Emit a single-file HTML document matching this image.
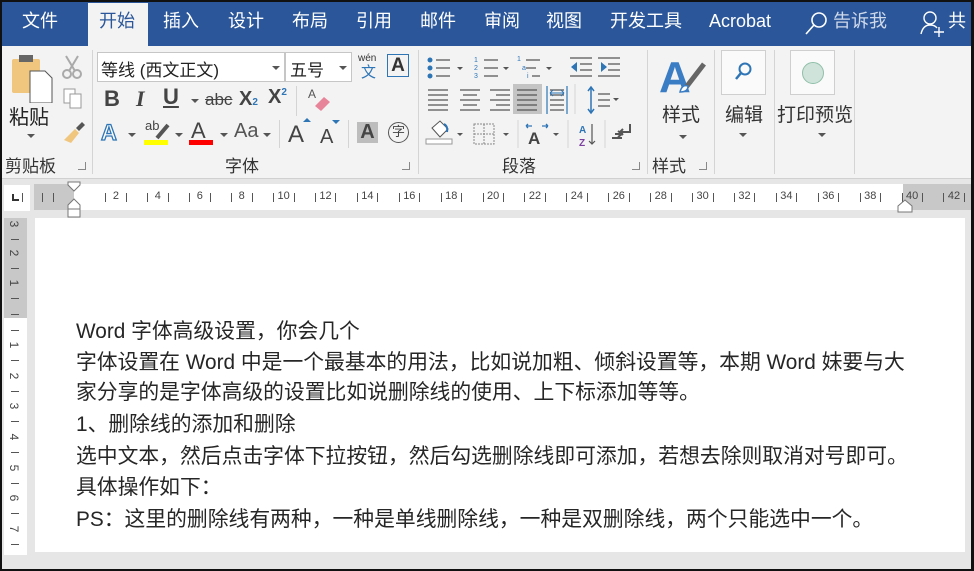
<!DOCTYPE html>
<html><head><meta charset="utf-8">
<style>
*{margin:0;padding:0;box-sizing:border-box}
body{width:974px;height:571px;overflow:hidden;background:#e6e6e6;font-family:"Liberation Sans","Noto Sans CJK SC",sans-serif;position:relative}
.a{position:absolute;white-space:nowrap}
.tab{position:absolute;top:9px;color:#fff;font-size:18px;line-height:24px}
.sep{position:absolute;width:1px;background:#d4d4d4}
.dd{position:absolute;width:0;height:0;border-left:4px solid transparent;border-right:4px solid transparent;border-top:4px solid #555}
.lbl{position:absolute;top:156px;font-size:17px;color:#333;line-height:22px}
.launch{position:absolute;top:162px;width:8px;height:8px;border-right:1px solid #888;border-bottom:1px solid #888}
.doc{position:absolute;left:76px;font-size:20.8px;color:#262626;line-height:26px;white-space:nowrap}
.rn{position:absolute;font-size:11px;color:#444;top:190px}
.vn{position:absolute;left:9px;font-size:12px;color:#444;transform:rotate(90deg);width:10px;text-align:center}
</style></head><body>
<div class="a" style="left:0;top:0;width:974px;height:2px;background:#111"></div>
<div class="a" style="left:0;top:0;width:2px;height:571px;background:#111"></div>
<div class="a" style="right:0;top:0;width:3px;height:571px;background:#111"></div>
<div class="a" style="left:0;bottom:0;width:974px;height:2px;background:#111"></div>
<div class="a" style="left:2px;top:2px;width:969px;height:44px;background:#2b579a"></div>
<div class="a" style="left:88px;top:3px;width:60px;height:43px;background:#f3f3f3"></div>
<div class="tab" style="left:22px">文件</div>
<div class="tab" style="left:99px;color:#2b579a">开始</div>
<div class="tab" style="left:163px">插入</div>
<div class="tab" style="left:228px">设计</div>
<div class="tab" style="left:292px">布局</div>
<div class="tab" style="left:356px">引用</div>
<div class="tab" style="left:420px">邮件</div>
<div class="tab" style="left:484px">审阅</div>
<div class="tab" style="left:546px">视图</div>
<div class="tab" style="left:610px">开发工具</div>
<div class="tab" style="left:709px">Acrobat</div>
<svg class="a" style="left:803px;top:10px" width="26" height="26"><circle cx="16" cy="10" r="7" fill="none" stroke="#fff" stroke-width="1.6"/><line x1="11" y1="15" x2="3" y2="24" stroke="#fff" stroke-width="1.6"/></svg>
<div class="tab" style="left:833px;color:#cfd9ea">告诉我</div>
<svg class="a" style="left:918px;top:9px" width="28" height="28"><circle cx="12" cy="9" r="6" fill="none" stroke="#fff" stroke-width="1.4"/><path d="M3 25 Q5 16 12 16 Q17 16 19 19" fill="none" stroke="#fff" stroke-width="1.4"/><path d="M21 18v10M16 23h10" stroke="#fff" stroke-width="1.4"/></svg>
<div class="tab" style="left:948px">共</div>
<div class="a" style="left:2px;top:46px;width:969px;height:133px;background:#f3f3f3;border-bottom:1px solid #d0d0d0"></div>
<div class="sep" style="left:92px;top:50px;height:124px"></div>
<div class="sep" style="left:418px;top:50px;height:124px"></div>
<div class="sep" style="left:647px;top:50px;height:124px"></div>
<div class="sep" style="left:714px;top:50px;height:124px"></div>
<div class="sep" style="left:774px;top:50px;height:124px"></div>
<div class="sep" style="left:854px;top:50px;height:124px"></div>
<svg class="a" style="left:10px;top:53px" width="45" height="50"><rect x="2" y="6" width="28" height="34" rx="2" fill="#f0c57d"/><rect x="9" y="2" width="14" height="7" fill="#666"/><path d="M20 18h15l7 7v25h-22z" fill="#fff" stroke="#555"/></svg>
<div class="a" style="left:9px;top:101px;font-size:20px;color:#222">粘贴</div>
<div class="dd" style="left:27px;top:134px"></div>
<svg class="a" style="left:60px;top:54px" width="24" height="26"><circle cx="7" cy="20" r="4" fill="none" stroke="#aaa" stroke-width="2"/><circle cx="17" cy="20" r="4" fill="none" stroke="#aaa" stroke-width="2"/><path d="M9 17L18 2M15 17L6 2" stroke="#aaa" stroke-width="2"/></svg>
<svg class="a" style="left:62px;top:87px" width="22" height="24"><rect x="2" y="2" width="11" height="14" fill="#fff" stroke="#999"/><rect x="8" y="7" width="11" height="14" fill="#fff" stroke="#999"/></svg>
<svg class="a" style="left:60px;top:118px" width="26" height="26"><path d="M16 10l6-6 3 3-6 6z" fill="#555"/><path d="M4 22l11-11 4 4-8 10z" fill="#f0c57d"/></svg>
<div class="lbl" style="left:5px">剪贴板</div>
<div class="launch" style="left:78px"></div>
<div class="a" style="left:97px;top:52px;width:188px;height:30px;background:#fff;border:1px solid #c6c6c6"></div>
<div class="a" style="left:101px;top:56px;font-size:17px;color:#222">等线 (西文正文)</div>
<div class="dd" style="left:272px;top:66px"></div>
<div class="a" style="left:285px;top:52px;width:67px;height:30px;background:#fff;border:1px solid #c6c6c6"></div>
<div class="a" style="left:290px;top:56px;font-size:17px;color:#222">五号</div>
<div class="dd" style="left:339px;top:66px"></div>
<div class="a" style="left:358px;top:53px;font-size:10px;color:#333">wén</div>
<div class="a" style="left:361px;top:61px;font-size:15px;color:#2e75b6">文</div>
<div class="a" style="left:387px;top:54px;width:22px;height:23px;border:1px solid #2e75b6;font-size:19px;font-weight:bold;color:#333;text-align:center;line-height:21px">A</div>
<div class="a" style="left:104px;top:86px;font-size:22px;font-weight:bold;color:#444">B</div>
<div class="a" style="left:136px;top:86px;font-size:22px;font-style:italic;color:#444;font-family:'Liberation Serif',serif;font-weight:bold">I</div>
<div class="a" style="left:163px;top:84px;font-size:22px;color:#444;font-weight:bold;text-decoration:underline">U</div>
<div class="dd" style="left:191px;top:99px"></div>
<div class="a" style="left:205px;top:90px;font-size:17px;color:#444;text-decoration:line-through">abc</div>
<div class="a" style="left:239px;top:88px;font-size:20px;color:#444;font-weight:bold">X<span style="font-size:10px;color:#2e75b6">2</span></div>
<div class="a" style="left:268px;top:86px;font-size:20px;color:#444;font-weight:bold">X<sup style="font-size:10px;color:#2e75b6;vertical-align:8px">2</sup></div>
<div class="sep" style="left:296px;top:86px;height:30px"></div>
<svg class="a" style="left:307px;top:86px" width="26" height="28"><text x="1" y="12" font-size="12" fill="#555" font-family="Liberation Sans">A</text><path d="M8 20l9-9 6 5-9 9z" fill="#e8849a"/></svg>
<div class="a" style="left:101px;top:120px;font-size:22px;color:#fff;-webkit-text-stroke:1.3px #2e75b6;font-weight:bold">A</div>
<div class="dd" style="left:128px;top:133px"></div>
<div class="a" style="left:145px;top:118px;font-size:13px;color:#444">ab</div>
<svg class="a" style="left:155px;top:122px" width="16" height="18"><path d="M2 16L13 3" stroke="#555" stroke-width="4"/></svg>
<div class="a" style="left:144px;top:140px;width:24px;height:5px;background:#ff0"></div>
<div class="dd" style="left:175px;top:133px"></div>
<div class="a" style="left:191px;top:118px;font-size:22px;color:#444">A</div>
<div class="a" style="left:189px;top:140px;width:24px;height:5px;background:#f00"></div>
<div class="dd" style="left:220px;top:133px"></div>
<div class="a" style="left:234px;top:120px;font-size:20px;color:#555">Aa</div>
<div class="dd" style="left:263px;top:133px"></div>
<div class="sep" style="left:279px;top:120px;height:28px"></div>
<div class="a" style="left:288px;top:121px;font-size:24px;color:#444">A</div>
<div class="a" style="left:303px;top:118px;width:0;height:0;border-left:4px solid transparent;border-right:4px solid transparent;border-bottom:4px solid #2e75b6"></div>
<div class="a" style="left:320px;top:126px;font-size:20px;color:#444">A</div>
<div class="a" style="left:332px;top:120px;width:0;height:0;border-left:4px solid transparent;border-right:4px solid transparent;border-top:4px solid #2e75b6"></div>
<div class="sep" style="left:348px;top:120px;height:28px"></div>
<div class="a" style="left:357px;top:122px;width:21px;height:21px;background:#bdbdbd;font-size:20px;font-weight:bold;color:#444;text-align:center;line-height:21px">A</div>
<div class="a" style="left:388px;top:122px;width:21px;height:21px;border:1.5px solid #555;border-radius:50%;font-size:13px;color:#444;text-align:center;line-height:18px">字</div>
<div class="lbl" style="left:225px">字体</div>
<div class="launch" style="left:402px"></div>
<svg class="a" style="left:420px;top:48px" width="228" height="108">
<g fill="#2e75b6"><circle cx="10" cy="12" r="2.5"/><circle cx="10" cy="20" r="2.5"/><circle cx="10" cy="28" r="2.5"/></g>
<g stroke="#555" stroke-width="1.2"><path d="M16 12h14M16 20h14M16 28h14"/><path d="M64 12h14M64 20h14M64 28h14"/><path d="M106 12h14M106 20h10M112 28h8"/></g>
<g font-size="7" fill="#2e75b6" font-family="Liberation Sans"><text x="54" y="14">1</text><text x="54" y="22">2</text><text x="54" y="30">3</text><text x="97" y="13">1</text><text x="102" y="22">a</text><text x="107" y="30">i</text></g>
<path d="M37 19l3 3 3-3zM83 19l3 3 3-3zM126 19l3 3 3-3" fill="#555"/>
<g stroke="#555" stroke-width="1.2"><path d="M150 10h22M160 16h12M160 22h12M150 28h22"/><path d="M178 10h22M188 16h12M188 22h12M178 28h22"/></g>
<path d="M157 14l-6 5 6 5z M181 14l6 5-6 5z" fill="#2e75b6"/>
<g stroke="#555" stroke-width="1.2">
<path d="M8 42h20M8 47h20M8 52h20M8 57h20M8 62h20"/>
<path d="M40 42h20M43 47h14M40 52h20M43 57h14M40 62h20"/>
<path d="M70 42h20M76 47h14M70 52h20M76 57h14M70 62h20"/>
</g>
<rect x="93" y="36" width="29" height="30" fill="#c4c4c4"/>
<g stroke="#555" stroke-width="1.2"><path d="M97 42h20M97 47h20M97 52h20M97 57h20M97 62h20"/><path d="M130 42h14M130 47h14M130 52h14M130 57h14M130 62h14"/><path d="M178 46h12M178 52h12M178 58h12"/></g>
<path d="M127 38v28M147 38v28" stroke="#2e75b6" stroke-width="1.2"/><path d="M130 45h14M130 45l3-3M130 45l3 3M144 45l-3-3M144 45l-3 3" stroke="#2e75b6" fill="none"/>
<path d="M171 40v24M168 43l3-4 3 4M168 61l3 4 3-4" stroke="#2e75b6" stroke-width="1.5" fill="none"/>
<path d="M193 50l3 3 3-3z" fill="#555"/>
<line x1="155" y1="36" x2="155" y2="66" stroke="#d4d4d4"/>
<path d="M12 80l8-7 8 8-8 8z" fill="#fff" stroke="#555"/><path d="M24 76q4 2 3 8" stroke="#2e75b6" fill="none" stroke-width="2"/><rect x="6" y="91" width="26" height="5" fill="#fff" stroke="#999"/>
<path d="M37 85l3 3 3-3z" fill="#555"/>
<g stroke="#888" stroke-dasharray="2 1"><rect x="54" y="76" width="20" height="20" fill="none"/><path d="M64 76v20M54 86h20"/></g>
<path d="M83 85l3 3 3-3z" fill="#555"/>
<line x1="98" y1="72" x2="98" y2="100" stroke="#d4d4d4"/>
<text x="108" y="96" font-size="17" font-weight="bold" fill="#444" font-family="Liberation Sans">A</text>
<path d="M106 78h6M106 78l2-2M106 78l2 2M128 78h-6M128 78l-2-2M128 78l-2 2" stroke="#2e75b6" fill="none" stroke-width="1.3"/>
<path d="M133 85l3 3 3-3z" fill="#555"/>
<line x1="148" y1="72" x2="148" y2="100" stroke="#d4d4d4"/>
<text x="159" y="85" font-size="10" font-weight="bold" fill="#2e75b6" font-family="Liberation Sans">A</text>
<text x="159" y="98" font-size="10" font-weight="bold" fill="#7b3fa0" font-family="Liberation Sans">Z</text>
<path d="M172 76v20M169 93l3 3 3-3" stroke="#555" fill="none" stroke-width="1.2"/>
<line x1="185" y1="72" x2="185" y2="100" stroke="#d4d4d4"/>
<path d="M210 76v8h-10M203 81l-3 3 3 3M195 86h8M192 90h10M198 83l4 3-4 3" stroke="#555" fill="none" stroke-width="2"/>
</svg>
<div class="lbl" style="left:502px">段落</div>
<div class="launch" style="left:632px"></div>
<svg class="a" style="left:658px;top:52px" width="50" height="46"><text x="1" y="40" font-size="44" font-weight="bold" fill="#3b7dc4" font-family="Liberation Sans">A</text><path d="M26 38l20-26" stroke="#666" stroke-width="5"/><path d="M22 40q2-8 8-6q0 6-8 6z" fill="#fff" stroke="#3b7dc4" stroke-width="1.5"/></svg>
<div class="a" style="left:662px;top:100px;font-size:19px;color:#333">样式</div>
<div class="dd" style="left:679px;top:135px"></div>
<div class="lbl" style="left:652px">样式</div>
<div class="launch" style="left:699px"></div>
<div class="a" style="left:721px;top:50px;width:45px;height:45px;background:#fafafa;border:1px solid #cfcfcf"></div>
<svg class="a" style="left:733px;top:60px" width="22" height="24"><circle cx="12" cy="9" r="5.5" fill="none" stroke="#2e75b6" stroke-width="2"/><path d="M8 13l-5 6" stroke="#2e75b6" stroke-width="2.5"/></svg>
<div class="a" style="left:725px;top:100px;font-size:19px;color:#333">编辑</div>
<div class="dd" style="left:739px;top:133px"></div>
<div class="a" style="left:790px;top:50px;width:45px;height:45px;background:#fafafa;border:1px solid #cfcfcf"></div>
<div class="a" style="left:802px;top:62px;width:22px;height:22px;border-radius:50%;background:#cfe3da;border:1px solid #8fbfa8"></div>
<div class="a" style="left:777px;top:100px;font-size:19px;color:#333">打印预览</div>
<div class="dd" style="left:818px;top:133px"></div>
<div class="a" style="left:2px;top:180px;width:969px;height:38px;background:#e6e6e6"></div>
<div class="a" style="left:4px;top:185px;width:26px;height:26px;background:#fff"></div>
<div class="a" style="left:12px;top:194px;width:7px;height:7px;border-left:2px solid #333;border-bottom:2px solid #333"></div>
<div class="a" style="left:34px;top:184px;width:937px;height:26px;background:#fff"></div>
<div class="a" style="left:34px;top:184px;width:40px;height:26px;background:#c8c8c8"></div>
<div class="a" style="left:903px;top:184px;width:68px;height:26px;background:#c8c8c8"></div>
<div id="ruler"></div>
<svg class="a" style="left:66px;top:181px" width="16" height="38"><path d="M2 1h12v3l-6 6-6-6z" fill="#fff" stroke="#777"/><path d="M8 18l6 6v4H2v-4z" fill="#fff" stroke="#777"/><rect x="2" y="28" width="12" height="8" fill="#fff" stroke="#777"/></svg>
<svg class="a" style="left:896px;top:198px" width="18" height="16"><path d="M9 2l7 6v6H2V8z" fill="#fff" stroke="#777"/></svg>
<div class="a" style="left:4px;top:218px;width:23px;height:337px;background:#fff"></div>
<div class="a" style="left:4px;top:218px;width:23px;height:100px;background:#c8c8c8"></div>
<div id="vr"></div>
<div class="a" style="left:35px;top:218px;width:930px;height:334px;background:#fff"></div>
<div class="doc" style="top:319px">Word 字体高级设置，你会几个</div>
<div class="doc" style="top:350px">字体设置在 Word 中是一个最基本的用法，比如说加粗、倾斜设置等，本期 Word 妹要与大</div>
<div class="doc" style="top:380px">家分享的是字体高级的设置比如说删除线的使用、上下标添加等等。</div>
<div class="doc" style="top:412px">1、删除线的添加和删除</div>
<div class="doc" style="top:444px">选中文本，然后点击字体下拉按钮，然后勾选删除线即可添加，若想去除则取消对号即可。</div>
<div class="doc" style="top:475px">具体操作如下：</div>
<div class="doc" style="top:507px">PS：这里的删除线有两种，一种是单线删除线，一种是双删除线，两个只能选中一个。</div>
<script>
var r=document.getElementById('ruler'),h='';
for(var n=-2;n<=42;n++){var x=74+20.95*n;
 if(n%2==0&&n>0){h+='<div class="rn" style="left:'+(x-(n>=10?6:3))+'px">'+n+'</div>';}
 if(n%2==0&&n!=0){h+='<div class="a" style="left:'+(x-10.5)+'px;top:193px;width:1px;height:9px;background:#555"></div><div class="a" style="left:'+(x+10)+'px;top:193px;width:1px;height:9px;background:#555"></div>';}
}
h+='<div class="a" style="left:53px;top:193px;width:1px;height:9px;background:#555"></div><div class="a" style="left:42px;top:193px;width:1px;height:9px;background:#555"></div>';
r.innerHTML=h;
var v=document.getElementById('vr'),g='';
var nums=[[224,'3'],[253,'2'],[283,'1'],[345,'1'],[376,'2'],[406,'3'],[437,'4'],[468,'5'],[498,'6'],[529,'7']];
nums.forEach(function(a){g+='<div class="vn" style="top:'+(a[0]-7)+'px">'+a[1]+'</div>';});
[239,268,298,314,330,360,391,421,452,483,513,544].forEach(function(y){g+='<div class="a" style="left:11px;top:'+y+'px;width:8px;height:1px;background:#555"></div>';});
v.innerHTML=g;
</script>
</body></html>
